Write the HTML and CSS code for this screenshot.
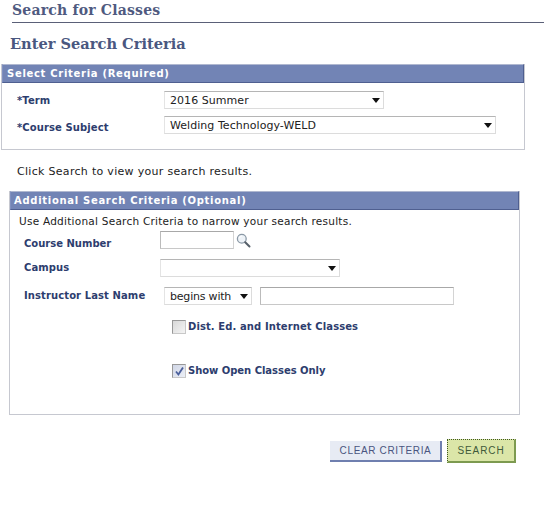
FILE: index.html
```html
<!DOCTYPE html>
<html lang="en">
<head>
<meta charset="utf-8">
<title>Search for Classes</title>
<link rel="stylesheet" href="styles.css">
</head>
<body>
<div class="page">
  <h1 class="page-title">Search for Classes</h1>
  <h2 class="sub-title">Enter Search Criteria</h2>

  <section class="panel panel-required">
    <h3 class="panel-head">Select Criteria (Required)</h3>
    <div class="req-body">
      <div class="req-row">
        <label class="lbl req-lbl req-lbl-term">*Term</label>
        <div class="sel sel-term"><span>2016 Summer</span><i class="arrow"></i></div>
      </div>
      <div class="req-row">
        <label class="lbl req-lbl req-lbl-low">*Course Subject</label>
        <div class="sel sel-subject"><span>Welding Technology-WELD</span><i class="arrow"></i></div>
      </div>
    </div>
  </section>

  <p class="hint">Click Search to view your search results.</p>

  <section class="panel panel-optional">
    <h3 class="panel-head head-opt">Additional Search Criteria (Optional)</h3>
    <p class="use">Use Additional Search Criteria to narrow your search results.</p>
    <div class="opt-row row-num">
      <label class="lbl opt-lbl opt-lbl-low">Course Number</label>
      <div class="inp inp-num"></div>
      <svg class="lens" width="15" height="15" viewBox="0 0 15 15" aria-hidden="true">
        <circle cx="5.8" cy="5.8" r="4.4" fill="#eef3f8" stroke="#8b99a6" stroke-width="1.3"/>
        <path d="M3.4 5.2a2.6 2.6 0 0 1 2.4-2" fill="none" stroke="#fff" stroke-width="1"/>
        <path d="M9.2 9.2l4.3 4.3" stroke="#56606a" stroke-width="2" stroke-linecap="round"/>
      </svg>
    </div>
    <div class="opt-row row-campus">
      <label class="lbl opt-lbl">Campus</label>
      <div class="sel sel-campus"><i class="arrow"></i></div>
    </div>
    <div class="opt-row row-inst">
      <label class="lbl opt-lbl opt-lbl-inst">Instructor Last Name</label>
      <div class="sel sel-begins"><span>begins with</span><i class="arrow"></i></div>
      <div class="inp inp-name"></div>
    </div>
    <div class="check check-dist">
      <span class="box"></span>
      <label class="lbl">Dist. Ed. and Internet Classes</label>
    </div>
    <div class="check check-open">
      <span class="box box-on">
        <svg width="11" height="11" viewBox="0 0 11 11" aria-hidden="true"><path d="M2 5.5l2.4 3L9 1.5" fill="none" stroke="#4a5f9c" stroke-width="1.8"/></svg>
      </span>
      <label class="lbl lbl-open">Show Open Classes Only</label>
    </div>
  </section>

  <div class="actions">
    <button class="btn btn-clear" type="button">Clear Criteria</button>
    <button class="btn btn-search" type="button">Search</button>
  </div>
</div>
</body>
</html>
```
FILE: styles.css
```css
* { box-sizing: border-box; }
html, body { margin: 0; padding: 0; background: #fff; }
body { font-family: "DejaVu Sans", Verdana, sans-serif; font-size: 11px; color: #222; }
.page { width: 554px; height: 514px; overflow: hidden; }
.page-title {
  margin: 0 10px 0 12px; height: 23px; padding-top: 1px;
  font: bold 14px/18px "DejaVu Serif", serif; color: #4f5a80; letter-spacing: .2px;
  border-bottom: 1px solid #5a6078;
}
.sub-title {
  margin: 11px 0 0 10px; height: 19px;
  font: bold 14.6px/19px "DejaVu Serif", serif; color: #4a5780;
}
.panel { border: 1px solid #c6c8d0; border-top: 0; }
.panel-required { margin: 11px 0 0 1px; width: 524px; height: 86px; }
.panel-head {
  margin: 0; height: 19px; padding-left: 4px;
  background: #7284b5; border: 1px solid #5f6f9f; border-color: #b0b8d0 #4f5f90 #4f5f90 #8090c0;
  color: #fff; font: bold 10px/17px "DejaVu Sans", sans-serif; letter-spacing: .7px;
}
.req-body { padding-top: 8px; display: flex; flex-direction: column; gap: 7px; }
.req-row { display: flex; align-items: center; height: 18px; }
.lbl { font: bold 10px/14px "DejaVu Sans", sans-serif; letter-spacing: .1px; color: #2d3d6e; }
.lbl-open { letter-spacing: -.03px; }
.req-lbl { width: 162px; padding-left: 15px; }
.req-lbl-term { padding-top: 2px; }
.req-lbl-low { padding-top: 6px; }
.sel {
  display: flex; align-items: center; justify-content: space-between;
  height: 18px; padding: 0 3px 0 5px; background: #fff;
  border: 1px solid #dcdcdc; border-top-color: #b5b5b5; border-left-color: #e4e4e4;
  font-size: 11px; color: #222; letter-spacing: .05px;
}
.arrow {
  display: block; width: 0; height: 0; margin-left: auto;
  border: 4px solid transparent; border-top: 5px solid #111; border-bottom: 0;
}
.sel-term { width: 220px; }
.sel-subject { width: 332px; }
.hint { margin: 15px 0 0 17px; height: 14px; line-height: 14px; letter-spacing: .3px; color: #222; }
.panel-optional { margin: 12px 0 0 9px; width: 511px; height: 224px; }
.head-opt { padding-left: 3px; }
.use { margin: 4px 0 0 9px; height: 14px; line-height: 14px; font-size: 10.5px; letter-spacing: .25px; color: #222; }
.opt-row { display: flex; align-items: center; }
.opt-lbl { width: 150px; padding-left: 14px; }
.opt-lbl-low { padding-top: 8px; letter-spacing: 0; }
.inp { height: 18px; background: #fff; border: 1px solid #c4c4c4; border-color: #a8a8a8 #d4d4d4 #c8c8c8 #bbb; }
.row-num { margin-top: 3px; height: 18px; }
.inp-num { width: 74px; }
.lens { margin-left: 2px; }
.row-campus { margin-top: 10px; height: 18px; }
.sel-campus { width: 180px; }
.row-inst { margin-top: 10px; height: 18px; }
.opt-lbl-inst { width: 154px; }
.sel-begins { width: 88px; letter-spacing: -.2px; }
.inp-name { width: 194px; margin-left: 8px; }
.check { display: flex; align-items: center; gap: 2px; margin-left: 162px; height: 16px; }
.check-dist { margin-top: 14px; }
.check-open { margin-top: 28px; }
.box {
  display: flex; align-items: center; justify-content: center;
  width: 14px; height: 14px; background: linear-gradient(135deg, #d8d8d8, #f4f4f4);
  border: 1px solid #a4a4a4; border-color: #989898 #c8c8c8 #c8c8c8 #989898;
}
.box-on { background: linear-gradient(135deg, #d0d6e6, #eceff6); }
.actions { display: flex; margin: 24px 0 0 330px; gap: 5px; align-items: center; }
.btn {
  height: 21px; padding: 0; font: 10px/17px "Liberation Sans", sans-serif;
  text-transform: uppercase; letter-spacing: .9px; cursor: pointer;
}
.btn-clear {
  width: 112px; background: #e7ebf4; color: #4a5580; letter-spacing: .65px; padding-left: 1px;
  border: 0; border-right: 2px solid #6f7faf; border-bottom: 2px solid #6f7faf;
}
.btn-search {
  width: 69px; height: 24px; background: #dbe6a8; color: #3f5a3a;
  border: 1px dotted #3f5a20; border-right: 2px solid #7d9a50; border-bottom: 2px solid #7d9a50;
}
```
